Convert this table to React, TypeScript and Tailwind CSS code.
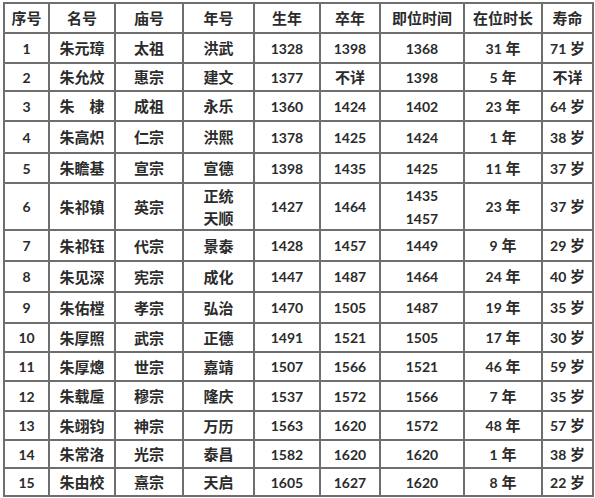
import React from "react";

const header = ["序号", "名号", "庙号", "年号", "生年", "卒年", "即位时间", "在位时长", "寿命"];

const rows: string[][] = [
  ["1", "朱元璋", "太祖", "洪武", "1328", "1398", "1368", "31 年", "71 岁"],
  ["2", "朱允炆", "惠宗", "建文", "1377", "不详", "1398", "5 年", "不详"],
  ["3", "朱　棣", "成祖", "永乐", "1360", "1424", "1402", "23 年", "64 岁"],
  ["4", "朱高炽", "仁宗", "洪熙", "1378", "1425", "1424", "1 年", "38 岁"],
  ["5", "朱瞻基", "宣宗", "宣德", "1398", "1435", "1425", "11 年", "37 岁"],
  ["6", "朱祁镇", "英宗", "正统\n天顺", "1427", "1464", "1435\n1457", "23 年", "37 岁"],
  ["7", "朱祁钰", "代宗", "景泰", "1428", "1457", "1449", "9 年", "29 岁"],
  ["8", "朱见深", "宪宗", "成化", "1447", "1487", "1464", "24 年", "40 岁"],
  ["9", "朱佑樘", "孝宗", "弘治", "1470", "1505", "1487", "19 年", "35 岁"],
  ["10", "朱厚照", "武宗", "正德", "1491", "1521", "1505", "17 年", "30 岁"],
  ["11", "朱厚熜", "世宗", "嘉靖", "1507", "1566", "1521", "46 年", "59 岁"],
  ["12", "朱载垕", "穆宗", "隆庆", "1537", "1572", "1566", "7 年", "35 岁"],
  ["13", "朱翊钧", "神宗", "万历", "1563", "1620", "1572", "48 年", "57 岁"],
  ["14", "朱常洛", "光宗", "泰昌", "1582", "1620", "1620", "1 年", "38 岁"],
  ["15", "朱由校", "熹宗", "天启", "1605", "1627", "1620", "8 年", "22 岁"],
];

function Line({ text }: { text: string }) {
  const parts = text.split(/(\d+)/).filter((p) => p !== "");
  return (
    <span>
      {parts.map((p, i) =>
        /^\d+$/.test(p) ? (
          <span key={i} className="text-[14px]">{p}</span>
        ) : (
          <span key={i} className="text-[15px]">{p}</span>
        )
      )}
    </span>
  );
}

function Cell({ text }: { text: string }) {
  const lines = text.split("\n");
  return (
    <div className="flex flex-col items-center justify-center border-r-2 border-b-2 border-[#6e6e6e] font-bold leading-[22px] text-[#2b2b2b] whitespace-pre">
      {lines.map((l, i) => (
        <Line key={i} text={l} />
      ))}
    </div>
  );
}

export default function App() {
  return (
    <div className="w-[595px] h-[498px] bg-white overflow-hidden pt-[2px] pl-[3px]" style={{ fontFamily: "Lato, 'Noto Sans CJK SC', sans-serif" }}>
      <div className="grid w-[591px] border-l-2 border-t-2 border-[#6e6e6e] grid-cols-[45px_66px_68px_71px_66px_60px_84px_78px_51px] grid-rows-[30px_30px_28px_30px_32px_30px_47px_31px_31px_31px_29px_29px_30px_29px_28px_28px]">
        {header.map((h, i) => (
          <Cell key={"h" + i} text={h} />
        ))}
        {rows.map((r, ri) => r.map((c, ci) => <Cell key={ri + "-" + ci} text={c} />))}
      </div>
    </div>
  );
}
